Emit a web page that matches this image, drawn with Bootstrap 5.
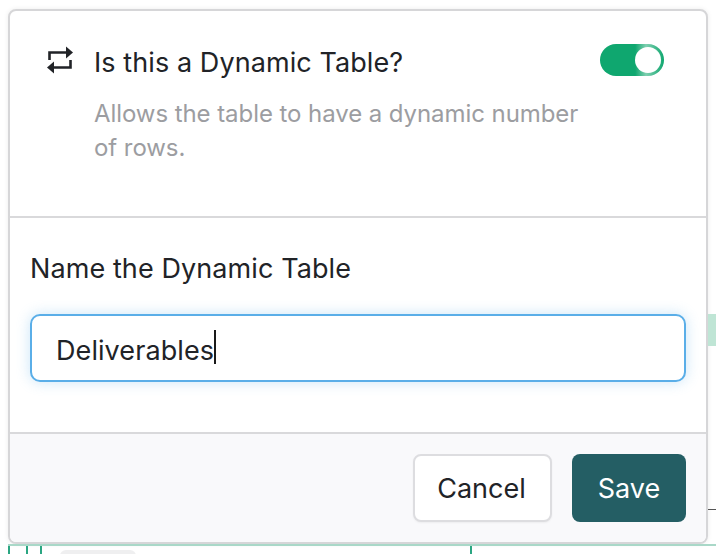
<!doctype html>
<html lang="en">
<head>
<meta charset="utf-8">
<title>Dynamic Table</title>
<link href="https://cdn.jsdelivr.net/npm/bootstrap@5.3.0/dist/css/bootstrap.min.css" rel="stylesheet">
<style>
html,body{height:554px;overflow:hidden;background:#fff}
body{font-family:Inter,"Liberation Sans",sans-serif;color:#212327;position:relative}
.sheet{margin:9px 0 0 8px;width:700px;height:535px;border:2px solid #d6d6d8;border-radius:8px;box-shadow:0 0 5px rgba(0,0,0,.08);overflow:hidden;background:#fff;display:flex;flex-direction:column}
.toprow{height:207px;padding:33px 42px 0 36px;border-bottom:2px solid #d9d9db;margin:0}
.swapicon{width:28px;height:30px;flex:none;margin-top:1px}
.q-title{font-size:27px;line-height:34px;margin:2px 0 0 20px;flex:1;letter-spacing:.08px}
.q-help{font-size:24px;line-height:34px;color:#9c9da1;margin:17px 0 0 48px;width:490px;letter-spacing:-.07px}
.toggle{width:64px!important;height:32px;margin:0!important;float:none!important;border:0!important;background:linear-gradient(90deg,#0fa76f 55%,#7fcfb0 72%,#0fa76f 100%)!important;position:relative;flex:none}
.toggle::after{content:"";position:absolute;right:3px;top:3px;width:26px;height:26px;border-radius:50%;background:#fff}
.switchwrap{padding:0;margin:0;min-height:0;display:flex}
.midrow{height:214px;padding:34px 20px 0 20px}
.name-label{font-size:27px;line-height:34px;margin:0 0 28px 0;display:block;letter-spacing:.09px}
.name-input{height:68px;font-size:27px;padding:5px 24px 0;color:#212327;border:2px solid #5aaee8!important;border-radius:10px;box-shadow:0 0 14px rgba(90,174,232,.32)!important;letter-spacing:.08px}
.name-wrap{position:relative}
.caretbar{position:absolute;left:184px;top:16px;width:2px;height:34px;background:#1a1a1a}
.footbar{flex:1;background:#f9f9fb;border-top:2px solid #d9d9db;padding:20px 20px 0 0;gap:20px}
.btn-x{font-size:27px;line-height:34px;height:68px;border-radius:8px;padding:1px 0 0}
.btn-cancel{width:139px;background:#fff;border:2px solid #dddde0;color:#212327;box-shadow:0 1px 2px rgba(0,0,0,.05);text-indent:-2px}
.btn-save{width:114px;background:#245e64;border:0;color:#fff}
.under{position:absolute;left:8px;right:0;top:544px;height:10px;border-top:2px solid #a9d8c8;display:flex}
.tick{width:2px;height:8px;background:#2ba682}
.t2{margin-left:16px}.t3{margin-left:12px}.t4{margin-left:428px}
.edge-mark{position:absolute;left:708px;top:314px;width:8px;height:32px;background:#bfe5d5}
.edge-line{position:absolute;left:708px;top:509px;width:8px;height:1px;background:#555}
.blob{position:absolute;left:52px;top:4px;width:76px;height:12px;border-radius:6px;background:#efeff0}
</style>
</head>
<body>
<div class="edge-mark"></div>
<div class="edge-line"></div>
<div class="under"><span class="tick"></span><span class="tick t2"></span><span class="tick t3"></span><span class="tick t4"></span><span class="blob"></span></div>
<div class="sheet">
  <div class="toprow">
    <div class="d-flex align-items-start">
      <svg class="swapicon" viewBox="0 0 28 30" aria-hidden="true"><path d="M3.500 15V7.500h19" fill="none" stroke="#212327" stroke-width="2.600"/><path d="M20 1.500l7 6-7 6z" fill="#212327"/><path d="M24.500 15v7.500H6" fill="none" stroke="#212327" stroke-width="2.600"/><path d="M8 16.500l-7 6 7 6z" fill="#212327"/></svg>
      <div class="q-title">Is this a Dynamic Table?</div>
      <div class="form-check form-switch switchwrap"><input class="form-check-input toggle" type="checkbox" role="switch" checked aria-label="Is this a Dynamic Table?"></div>
    </div>
    <p class="q-help">Allows the table to have a dynamic number of rows.</p>
  </div>
  <div class="midrow">
    <label class="name-label form-label" for="nm">Name the Dynamic Table</label>
    <div class="name-wrap"><input id="nm" class="form-control name-input" type="text" value="Deliverables"><span class="caretbar"></span></div>
  </div>
  <div class="footbar d-flex justify-content-end align-items-start">
    <button type="button" class="btn btn-x btn-cancel">Cancel</button>
    <button type="button" class="btn btn-x btn-save">Save</button>
  </div>
</div>
</body>
</html>
